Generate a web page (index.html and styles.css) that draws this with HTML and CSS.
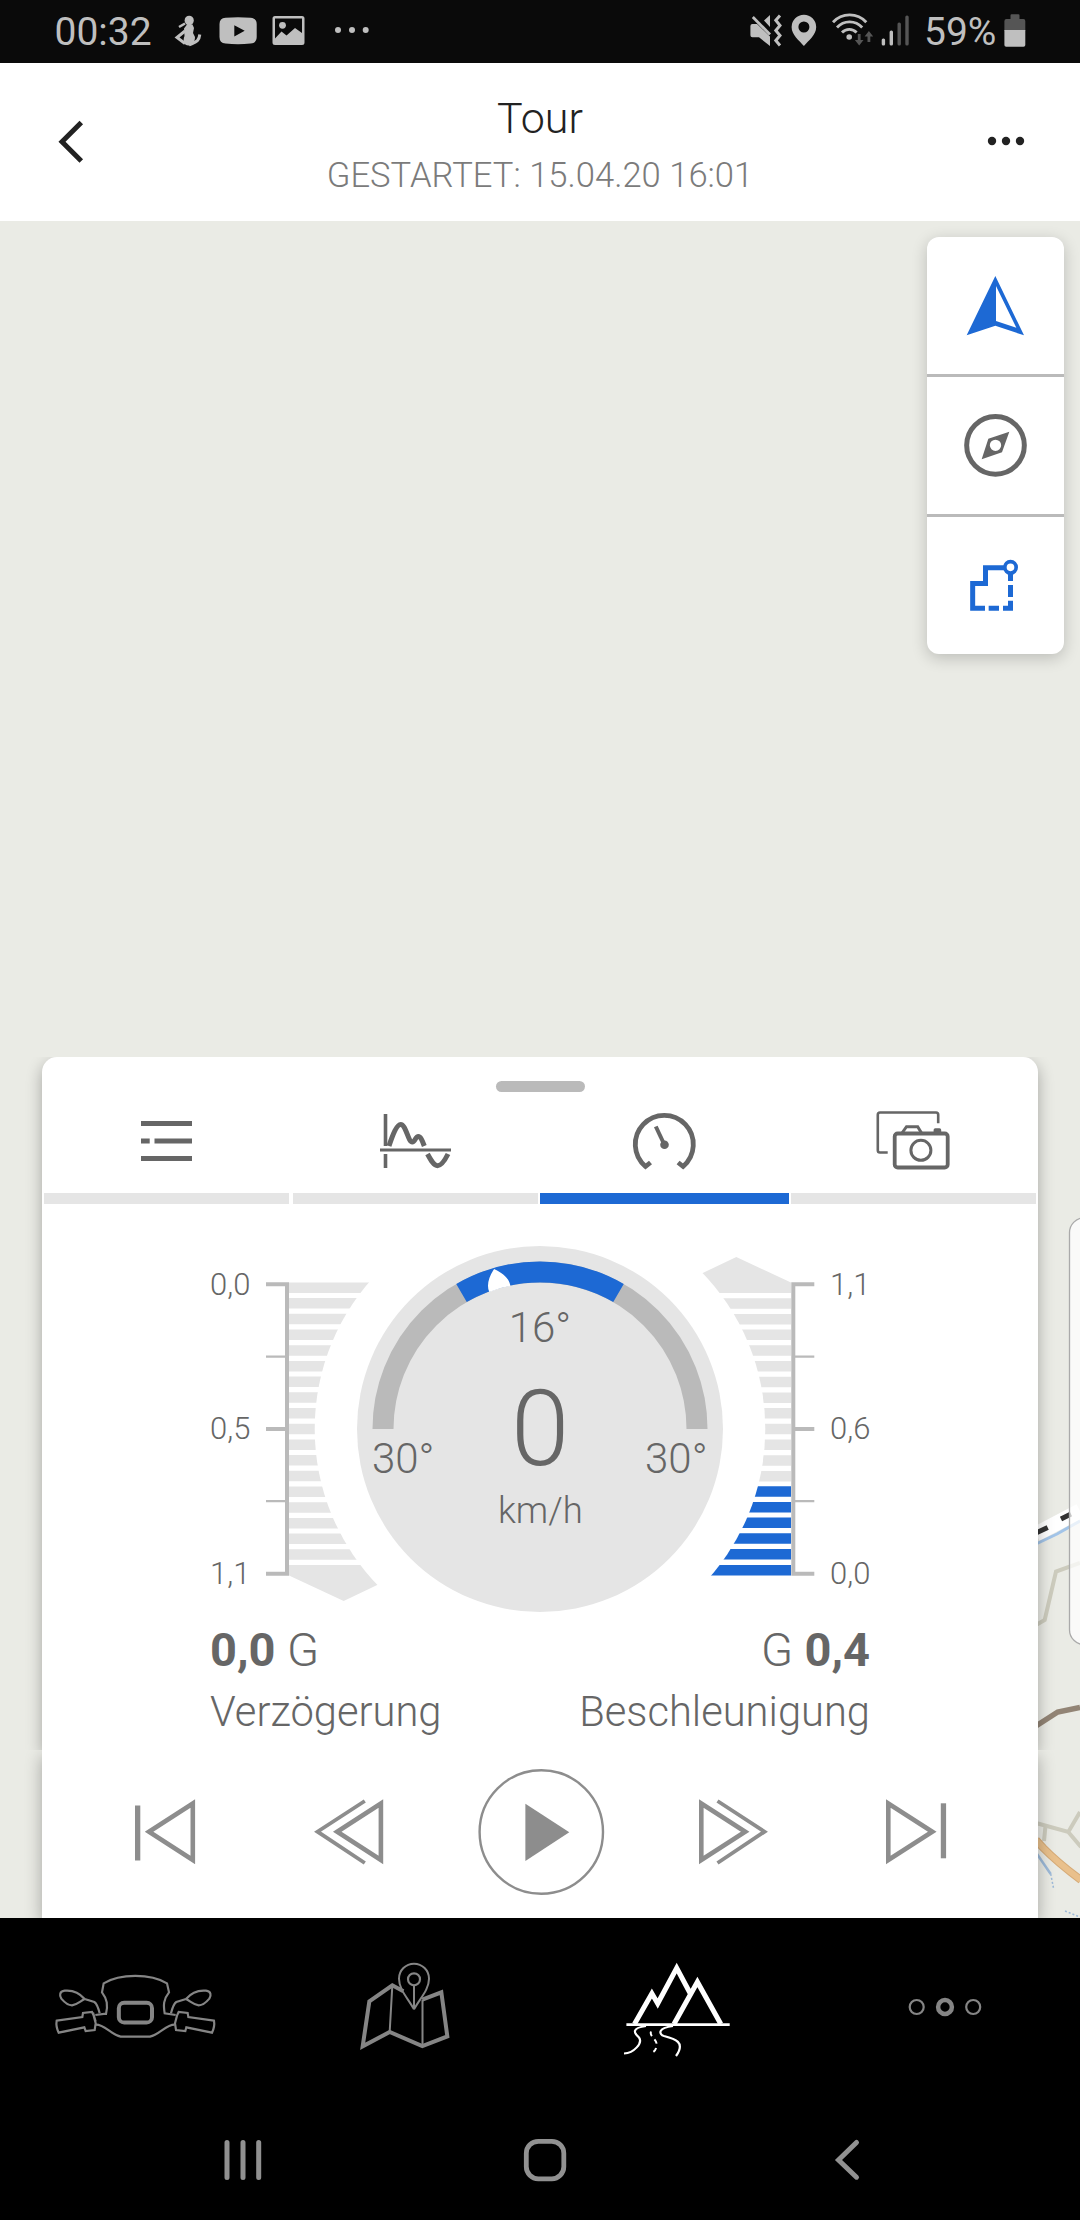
FILE: index.html
```html
<!DOCTYPE html>
<html lang="de">
<head>
<meta charset="utf-8">
<title>Tour</title>
<link rel="stylesheet" href="styles.css">
</head>
<body>
<div class="screen">
  <div class="status">
    <span class="clock">00:32</span>
    <svg class="s-person" width="28" height="63" viewBox="174 0 28 63"><ellipse cx="189.200" cy="20.500" rx="4.600" ry="4.800"/><path d="M184 28.500 L187 24.500 H192.500 L194 28 L193 33 L195 37 C195 42 192.500 45.500 188.500 45.500 C184 45.500 182.500 41 184.500 36 Z"/><path d="M185 31 L177 37.500 L185 43.500" class="ln" stroke-width="3"/><path d="M179 27 L185 23.500" class="ln" stroke-width="2.600"/><path d="M189 45 C195 42 199 42 199.800 34.500" class="ln" stroke-width="3"/></svg>
    <svg class="s-video" width="38" height="63" viewBox="218.500 0 38 63"><path fill-rule="evenodd" d="M225 17.800 Q237.500 16.600 250 17.800 Q256.200 18.400 256.200 24 V37 Q256.200 43 250 43.600 Q237.500 44.800 225 43.600 Q219 43 219 37 V24 Q219 18.400 225 17.800 Z M233.800 25.200 V36.400 L244.200 30.800 Z"/></svg>
    <svg class="s-photo" width="33" height="63" viewBox="271.500 0 33 63"><path fill-rule="evenodd" d="M274.500 16 H301.500 Q304 16 304 18.500 V42.500 Q304 45 301.500 45 H274.500 Q272 45 272 42.500 V18.500 Q272 16 274.500 16 Z M274.500 18.500 V38.500 L281 31.500 L286 35.500 L294.500 28 L301.500 33 V18.500 Z"/><circle cx="282" cy="25.300" r="3.400"/></svg>
    <svg class="s-dots" width="36" height="63" viewBox="334 0 36 63"><circle cx="338" cy="30" r="3"/><circle cx="352" cy="30" r="3"/><circle cx="365.700" cy="30" r="3"/></svg>
    <span class="fill"></span>
    <svg width="33" height="63" viewBox="750 0 33 63"><path d="M750.400 26 Q750.400 24 752.400 24 H757 L770 36.500 V46 L759 37.300 H752.400 Q750.400 37.300 750.400 35.300 Z M764 20.500 L770 15 V27 Z"/><path d="M752.800 17 L770 34.500" class="ln" stroke-width="2.800"/><path d="M780 15.500 L775.800 20.300 L780 25.500 L775.800 30.500 L780 35.500 L775.800 40.500 L780 45.500" class="ln" stroke-width="3"/></svg>
    <svg class="s-pin" width="26" height="63" viewBox="790.500 0 26 63"><path fill-rule="evenodd" d="M803.400 14.800 A12.300 12.300 0 0 1 815.700 27 C815.700 35 808 40.500 803.400 46 C798.800 40.500 791.100 35 791.100 27 A12.300 12.300 0 0 1 803.400 14.800 Z M803.400 21.500 A5.500 5.500 0 1 0 803.400 32.500 A5.500 5.500 0 1 0 803.400 21.500 Z"/></svg>
    <svg class="s-wifi" width="43" height="63" viewBox="831 0 43 63"><circle cx="849.200" cy="37" r="2.800"/><path class="ln" stroke-width="2.800" d="M833 22.300 A22.500 22.500 0 0 1 866.300 22.300 M837 27.500 A17 17 0 0 1 862.200 27.500 M842 32.500 A10 10 0 0 1 856.600 32.500"/><path class="dim" d="M857.800 34 H860.600 V40 H863.500 L859.200 45.500 L854.900 40 H857.800 Z M867.500 42 V36.500 H864.600 L868.900 31 L873.200 36.500 H870.300 V42 Z"/></svg>
    <svg class="s-signal" width="29" height="63" viewBox="881 0 29 63"><rect x="881.700" y="38.500" width="3.400" height="7" rx="1.500"/><rect x="889.600" y="30.500" width="3.400" height="15" rx="1.500"/><rect class="dim" x="897.500" y="22.500" width="3.400" height="23" rx="1.500"/><rect class="dim" x="905.300" y="15.500" width="3.400" height="30" rx="1.500"/></svg>
    <span class="percent">59%</span>
    <svg class="s-batt" width="22" height="63" viewBox="1003.500 0 22 63"><path class="dim" d="M1010 15.500 Q1010 14.300 1011 14.300 H1018 Q1019 14.300 1019 15.500 V19 H1023 Q1024.800 19 1024.800 21 V31 H1003.900 V21 Q1003.900 19 1005.900 19 H1010 Z"/><path d="M1003.900 30 H1024.800 V45 Q1024.800 46.800 1023 46.800 H1005.700 Q1003.900 46.800 1003.900 45 Z"/></svg>
  </div>

  <header class="header">
    <svg width="110" height="158" viewBox="0 63 110 158"><path d="M81.300 122.500 L62 141.700 L81.300 161" fill="none" stroke="#222" stroke-width="5"/></svg>
    <div class="titles">
      <h1 class="title">Tour</h1>
      <p class="subtitle">GESTARTET: 15.04.20 16:01</p>
    </div>
    <svg width="110" height="158" viewBox="970 63 110 158" fill="#222"><circle cx="992" cy="141" r="4.200"/><circle cx="1006" cy="141" r="4.200"/><circle cx="1020" cy="141" r="4.200"/></svg>
  </header>

  <main class="map">
    <svg class="terrain" width="1080" height="1697" viewBox="0 221 1080 1697" fill="none">
      <path d="M1036 1534 L1080 1511" stroke="#fff" stroke-width="15"/>
      <path d="M1036 1544 L1057 1534 L1080 1521" stroke="#a2c4e8" stroke-width="3"/>
      <path d="M1037 1532.500 L1047.700 1527.500 M1061 1519 L1071 1514" stroke="#333" stroke-width="5"/>
      <path d="M1036 1625 L1044.700 1620 L1056 1571.500 L1080 1563 M1036 1823 L1068.300 1832 L1080 1812 M1068.300 1832 L1081 1847 M1045.700 1824 L1044 1841" stroke="#cccbbd" stroke-width="4"/>
      <path d="M1036 1726 L1057.700 1712 L1080 1707.500" stroke="#928475" stroke-width="5.500"/>
      <path d="M1036 1840 L1043.300 1848 Q1058 1863 1081 1880" stroke="#d6ab78" stroke-width="8"/>
      <path d="M1036 1840 L1043.300 1848 Q1058 1863 1081 1880" stroke="#e9c08c" stroke-width="6"/>
      <path d="M1037 1854 L1050.700 1874" stroke="#9dbad9" stroke-width="2.500"/>
      <path d="M1050.700 1874 L1053.500 1888 M1065 1911 L1080 1917" stroke="#9dbad9" stroke-width="1.500" stroke-dasharray="2 2"/>
      <rect x="1069.500" y="1217.700" width="40" height="427" rx="15" fill="#fff" fill-opacity=".75" stroke="#aaa" stroke-width="1.300"/>
    </svg>

    <div class="controls">
      <svg class="control" viewBox="81 51 411 411" fill="#1d69d4"><path fill-rule="evenodd" d="M286 168 L372 346 L286 317 L200 346 Z M288 198 V303 L349 323 Z"/></svg>
      <svg class="control" viewBox="81 471 411 411" fill="#666"><circle cx="286.500" cy="676" r="86.500" fill="none" stroke="#666" stroke-width="15"/><path fill-rule="evenodd" d="M328 635 L306 697 L245 718 L265 656 Z M286.500 659 A17 17 0 1 0 286.500 693 A17 17 0 1 0 286.500 659 Z"/></svg>
      <svg class="control" viewBox="81 891 411 411" fill="none" stroke="#1d69d4" stroke-width="15"><path d="M312 1043 H256.500 V1090.500 H218 V1165 H255 M266 1165 H297 M309 1165 H331.500 V1142 M331.500 1131 V1095 M331.500 1083 V1062"/><circle cx="331.500" cy="1042" r="17" stroke-width="11"/></svg>
    </div>

    <section class="sheet">
      <div class="handle"></div>
      <nav class="tabs">
        <a class="tab"><svg width="249" height="101" viewBox="42 1092 249 101" fill="#666"><path d="M141 1121 H192 V1126 H141 Z M141 1138.400 H149.700 V1143.400 H141 Z M154.500 1138.400 H192 V1143.400 H154.500 Z M141 1156 H192 V1161 H141 Z"/></svg></a>
        <a class="tab"><svg width="249" height="101" viewBox="291 1092 249 101" fill="none" stroke="#666"><path stroke-width="3.600" d="M385.500 1114 V1146 M385.500 1154 V1168"/><path stroke-width="3.200" d="M380 1150 H451"/><path stroke-width="5" d="M389 1146 C393 1134 397 1124.500 400.700 1124.500 C406 1124.500 408 1142 412.300 1142 C415 1142 415.500 1136.500 418.300 1136.500 C420.500 1136.500 422 1140 424.300 1146 M427.500 1154 C431 1160.500 434 1165.700 437.500 1165.700 C441 1165.700 444.500 1161 448 1154"/></svg></a>
        <a class="tab active"><svg width="249" height="101" viewBox="540 1092 249 101" fill="none" stroke="#666" stroke-width="4.800"><path d="M650.500 1162.500 L645.500 1166.500 A29 29 0 1 1 683.100 1166.500 L678.100 1162.500" stroke-linejoin="miter"/><path stroke-width="4" d="M655.800 1126.500 L664.300 1144.500"/><circle cx="664.500" cy="1144.800" r="4.300" fill="#666" stroke="none"/></svg></a>
        <a class="tab"><svg width="249" height="101" viewBox="789 1092 249 101" fill="none" stroke="#666" stroke-width="3"><path stroke-width="2.600" d="M887.700 1152.500 H880 Q877.800 1152.500 877.800 1150.300 V1114.700 Q877.800 1112.500 880 1112.500 H936 Q938.200 1112.500 938.200 1114.700 V1123.300"/><rect x="894.700" y="1133.500" width="53" height="34" rx="3" stroke-width="3.800"/><circle cx="920.900" cy="1150.300" r="10"/><path d="M902 1133 L906.500 1126.700 H917.700 L921.500 1133"/><path fill="#666" stroke="none" d="M933.600 1130 Q933.600 1128.300 935.300 1128.300 H939.500 Q941.200 1128.300 941.200 1130 V1133 H933.600 Z"/></svg></a>
      </nav>

      <svg class="gauges" width="996" height="416" viewBox="42 1204 996 416">
        <defs>
          <g id="slots">
            <path d="M289 1282.400h95v10.500h-95z M289 1298.100h95v10.500h-95z M289 1313.800h95v10.500h-95z M289 1329.500h95v10.500h-95z M289 1345.200h95v10.500h-95z M289 1360.900h95v10.500h-95z M289 1376.600h95v10.500h-95z M289 1392.300h95v10.500h-95z M289 1408h95v10.500h-95z M289 1423.700h95v10.500h-95z M289 1439.400h95v10.500h-95z M289 1455.100h95v10.500h-95z M289 1470.800h95v10.500h-95z M289 1486.500h95v10.500h-95z M289 1502.200h95v10.500h-95z M289 1517.900h95v10.500h-95z M289 1533.600h95v10.500h-95z M289 1549.300h95v10.500h-95z M289 1565 H384 V1581.800 L343.700 1601 L289 1575.500 Z"/>
          </g>
          <path id="axis" d="M289 1282.300 V1575.700 H266 V1571.700 H285 V1502.300 H266 V1500 H285 V1431 H266 V1427 H285 V1357.700 H266 V1355.400 H285 V1286.300 H266 V1282.300 Z"/>
        </defs>
        <use href="#slots" fill="#e5e5e5"/>
        <use href="#slots" fill="#e5e5e5" transform="rotate(180 540 1429)"/>
        <path fill="#fff" d="M696 1482h95v94h-95z"/>
        <path fill="#1d69d4" d="M696 1486.200h95v10.500h-95z M696 1501.900h95v10.500h-95z M696 1517.600h95v10.500h-95z M696 1533.300h95v10.500h-95z M696 1549h95v10.500h-95z M696 1565h95v10.600h-95z"/>
        <circle cx="540" cy="1429" r="225.300" fill="#fff"/>
        <use href="#axis" fill="#bababa"/>
        <use href="#axis" fill="#bababa" transform="translate(1080.300 0) scale(-1 1)"/>
        <circle cx="540" cy="1429" r="183" fill="#e5e5e5"/>
        <path d="M383 1429 A157 157 0 0 1 697 1429" fill="none" stroke="#bababa" stroke-width="21"/>
        <path d="M461.500 1293.030 A157 157 0 0 1 618.500 1293.030" fill="none" stroke="#1d69d4" stroke-width="21"/>
        <path d="M540 1262.500 C547.500 1269 552 1276 551 1283.400 Q540 1282 529 1283.400 C528 1276 532.500 1269 540 1262.500 Z" fill="#fff" transform="rotate(-16 540 1429)"/>
        <g class="dial">
          <text x="540" y="1342" font-size="42" text-anchor="middle">16°</text>
          <text x="372" y="1473" font-size="42">30°</text>
          <text x="707.500" y="1473" font-size="42" text-anchor="end">30°</text>
          <text x="540" y="1465" font-size="105" text-anchor="middle">0</text>
          <text x="540.300" y="1522.700" font-size="36.500" text-anchor="middle">km/h</text>
          <g font-size="31">
            <text x="210" y="1294.500">0,0</text><text x="210" y="1439.300">0,5</text><text x="210" y="1583.800">1,1</text>
            <text x="830" y="1294.500">1,1</text><text x="830" y="1439.300">0,6</text><text x="830" y="1583.800">0,0</text>
          </g>
        </g>
      </svg>

      <div class="readings">
        <div class="reading">
          <div class="value"><b>0,0</b> G</div>
          <div class="label">Verzögerung</div>
        </div>
        <div class="reading right">
          <div class="value">G <b>0,4</b></div>
          <div class="label">Beschleunigung</div>
        </div>
      </div>
    </section>

    <section class="player">
      <svg width="180" height="168" viewBox="75 1750 180 168"><path fill="#8d8d8d" stroke="none" d="M135 1805.500 h5.300 v55 h-5.300 z"/><path d="M149 1831.700 L192.800 1803.500 V1860 Z"/></svg>
      <svg width="180" height="168" viewBox="262.500 1750 180 168"><path stroke-width="3.800" d="M364.300 1801 L317 1831.700 L364.300 1863"/><path d="M336.700 1831.700 L380.400 1803.500 V1860 Z"/></svg>
      <svg width="180" height="168" viewBox="450 1750 180 168"><circle cx="541.300" cy="1832" r="61.700" stroke-width="2.400"/><path fill="#8d8d8d" stroke="none" d="M525.400 1803.700 L569.300 1832.300 L525.400 1861 Z"/></svg>
      <svg width="180" height="168" viewBox="637.500 1750 180 168"><path stroke-width="3.800" d="M717 1801 L764 1831.700 L717 1863"/><path d="M744.700 1831.700 L700.800 1803.500 V1860 Z"/></svg>
      <svg width="180" height="168" viewBox="825 1750 180 168"><path fill="#8d8d8d" stroke="none" d="M940.800 1803.300 h5.300 v55 h-5.300 z"/><path d="M932.300 1831.700 L888.300 1803.500 V1860 Z"/></svg>
    </section>
  </main>

  <nav class="appnav">
    <svg viewBox="-90 -36 810 516" stroke="#858585" stroke-width="6.500">
      <path d="M231 252 H228 C234 225 232 208 216 187 L221 160 C270 130 362 130 411 160 L417 187 C400 208 400 225 404 250 L437 255 M196 255 L228 251"/>
      <path d="M198 284 C225 284 240 312 272 320 H360 C392 312 407 284 434 284"/>
      <rect x="266.500" y="218.500" width="99.500" height="59" rx="16" stroke-width="12"/>
      <path d="M80 272 L157 261 L159 249 L186 246 L191 257 L197 280 L194 300 L167 303 L163 292 L86 308 Q77 290 80 272 Z M189 248 L197 275"/>
      <path d="M552 272 L475 261 L473 249 L446 246 L441 257 L435 280 L438 300 L466 303 L469 292 L546 308 Q555 290 552 272 Z"/>
      <path d="M164 207 C148 188 125 180 104 182 C88 184 88 196 94 206 C104 218 114 226 126 226 C142 224 150 214 164 207 Z L193 216 Q202 222 209 250"/>
      <path d="M468 207 C484 188 507 180 528 182 C544 184 544 196 538 206 C528 218 518 226 506 226 C490 224 482 214 468 207 Z L439 216 Q430 222 423 250"/>
    </svg>
    <svg viewBox="720 -36 810 516" stroke="#858585" stroke-width="12">
      <path d="M1120 184 L1087 166 L1018 214 L998 349 L1079 306 L1177 348 L1252 319 L1234 187 L1177 209"/>
      <path stroke-width="6" d="M1087 166 L1079 306 M1177.500 209 V348"/>
      <path stroke-width="6" d="M1152 238 C1135 206 1107 180 1107 146 A45 45 0 0 1 1197 146 C1197 180 1169 206 1152 238 V167"/>
      <circle cx="1152" cy="148" r="18" stroke-width="6.500"/>
    </svg>
    <svg viewBox="540 1918 270 172" stroke="#fff" stroke-width="5">
      <path d="M634.500 2024 L651.900 1993.500 L657.700 2003.500 L676.700 1968 L690 1993 M674 2024 L697.400 1982 L720.800 2024" stroke-miterlimit="8"/>
      <path stroke-width="2.800" d="M626.400 2024.700 H729.700"/>
      <path stroke-width="2.200" d="M624 2053.500 C634 2053 643 2043 639 2037.500 C634 2033 631 2028 646 2026 M676 2056 C686 2042 675 2039 664 2036 C659 2034.500 657 2028 673 2026"/>
      <path stroke-width="2" stroke-dasharray="5 4" d="M651 2031.500 C649 2037 658 2039 656.500 2046 C656 2050 654 2052 651 2053"/>
    </svg>
    <svg viewBox="810 1918 270 172" stroke="#858585" stroke-width="2.200"><circle cx="916.700" cy="2007" r="7"/><circle cx="945" cy="2007" r="6.900" stroke-width="4.500"/><circle cx="973.200" cy="2007" r="7"/></svg>
  </nav>

  <nav class="sysnav">
    <svg viewBox="0 0 302 130"><path stroke-width="5" d="M135 52.500 V87.500 M151 52.500 V87.500 M166.700 52.500 V87.500"/></svg>
    <svg viewBox="0 0 302 130"><rect x="132.300" y="51.300" width="37.500" height="37.500" rx="12" stroke-width="4.800"/></svg>
    <svg viewBox="0 0 302 130"><path stroke-width="5" d="M160.500 52.500 L142.500 70 L160.500 87.200" stroke-linecap="round"/></svg>
  </nav>
</div>
</body>
</html>
```

FILE: styles.css
```css
* { box-sizing: border-box; margin: 0; padding: 0; }
body { font-family: Roboto, "Liberation Sans", sans-serif; font-weight: 300; background: #000; }
svg { display: block; flex: none; }
.screen { width: 1080px; height: 2220px; display: flex; flex-direction: column; overflow: hidden; background: #000; }

.status { height: 63px; display: flex; align-items: stretch; background: #0a0a0a; color: #bfbfbf; fill: #bfbfbf; padding: 0 54.5px 0 54.5px; font-size: 39px; font-weight: 400; line-height: 64px; }
.status .ln { fill: none; stroke: #bfbfbf; }
.status .dim { fill: #555; }
.clock { width: 119.500px; }
.s-video { margin-left: 16.500px; }
.s-photo { margin-left: 15px; }
.s-dots { margin-left: 29.500px; }
.fill { flex: 1; }
.s-pin { margin-left: 7.500px; }
.s-wifi { margin-left: 14.500px; }
.s-signal { margin-left: 7px; }
.percent { width: 79.500px; margin-left: 14px; }

.header { height: 158px; display: flex; justify-content: space-between; background: #fff; }
.titles { padding-top: 30px; text-align: center; }
.title { font-size: 43px; line-height: 50px; font-weight: 300; color: #222; }
.subtitle { margin-top: 11px; font-size: 34.600px; line-height: 42px; color: #7b7b7b; white-space: nowrap; }

.map { position: relative; height: 1697px; background: #eaebe5; overflow: hidden; padding: 836px 42px 0; }
.terrain { position: absolute; left: 0; top: 0; }
.controls { position: absolute; right: 16px; top: 16px; width: 137px; border-radius: 12px; background: #fff; box-shadow: 0 4px 16px rgba(0, 0, 0, .2); }
.control { width: 137px; height: 137px; }
.control + .control { border-top: 3px solid #bababa; height: 140px; }

.sheet { position: relative; height: 693px; padding-top: 24px; background: #fff; border-radius: 15px 15px 0 0; box-shadow: 0 6px 16px rgba(0, 0, 0, .3); clip-path: inset(0 -30px 0 -30px); }
.handle { width: 89px; height: 11px; margin: 0 auto; border-radius: 6px; background: #bababa; }
.tabs { display: grid; grid-template-columns: repeat(4, 249px); }
.tab::after { content: ""; display: block; height: 11px; margin: 0 2px; background: #e5e5e5; }
.tab.active::after { margin: 0; background: #1d69d4; }
.dial { fill: #666; }
.readings { display: flex; justify-content: space-between; padding: 2px 168px 0; color: #666; }
.right { text-align: right; }
.value { font-size: 47px; line-height: 56px; }
.value b { font-weight: 700; }
.label { margin-top: 9px; font-size: 41.700px; line-height: 50px; }

.player { position: relative; display: flex; justify-content: space-between; height: 168px; padding: 0 33px; background: #fff; fill: none; stroke: #8d8d8d; stroke-width: 4.600px; box-shadow: 0 6px 16px rgba(0, 0, 0, .3); clip-path: inset(0 -30px 0 -30px); }

.appnav { display: grid; grid-template-columns: repeat(4, 270px); height: 172px; fill: none; }
.appnav svg { width: 270px; height: 172px; }
.sysnav { display: grid; grid-template-columns: repeat(3, 302px); height: 130px; padding-left: 92px; fill: none; stroke: #919191; stroke-linecap: round; }
.sysnav svg { width: 302px; height: 130px; }
```
